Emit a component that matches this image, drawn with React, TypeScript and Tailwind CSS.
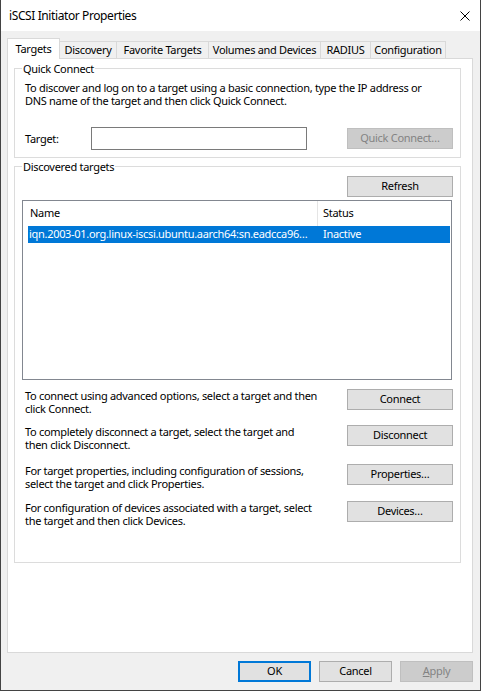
import React from 'react';

type BtnProps = {
  children: React.ReactNode;
  disabled?: boolean;
  focused?: boolean;
  className?: string;
};

const Button: React.FC<BtnProps> = ({ children, disabled, focused, className = '' }) => {
  let look = 'bg-[#e1e1e1] border border-[#adadad] text-black';
  if (disabled) look = 'bg-[#cccccc] border border-[#bfbfbf] text-[#838383]';
  if (focused) look = 'bg-[#e1e1e1] border-2 border-[#0078d7] text-black';
  return (
    <div className={`h-[21px] flex items-center justify-center shrink-0 ${look} ${className}`}>
      {children}
    </div>
  );
};

const Group: React.FC<{ label: string; className?: string; children: React.ReactNode }> = ({
  label,
  className = '',
  children,
}) => (
  <div className={`relative border border-[#dcdcdc] ${className}`}>
    <span className="absolute left-[7px] -top-[8px] bg-white px-[1px] leading-[15px]">{label}</span>
    {children}
  </div>
);

const tabs = [
  { name: 'Discovery', w: 'w-[57px]' },
  { name: 'Favorite Targets', w: 'w-[92px]' },
  { name: 'Volumes and Devices', w: 'w-[112px]' },
  { name: 'RADIUS', w: 'w-[50px]' },
  { name: 'Configuration', w: 'w-[75px]' },
];

const actions = [
  {
    lines: ['To connect using advanced options, select a target and then', 'click Connect.'],
    button: 'Connect',
    mt: 'mt-[9px]',
  },
  {
    lines: ['To completely disconnect a target, select the target and', 'then click Disconnect.'],
    button: 'Disconnect',
    mt: 'mt-[10px]',
  },
  {
    lines: ['For target properties, including configuration of sessions,', 'select the target and click Properties.'],
    button: 'Properties…',
    mt: 'mt-[13px]',
  },
  {
    lines: ['For configuration of devices associated with a target, select', 'the target and then click Devices.'],
    button: 'Devices…',
    mt: 'mt-[11px]',
  },
];

export default function App() {
  return (
    <div className="w-[481px] h-[691px] flex flex-col bg-[#f0f0f0] border-x border-b border-[#434343] text-[11px] tracking-[-0.3px] text-black font-['Segoe_UI','Noto_Sans',sans-serif] select-none">
      {/* Title bar */}
      <div className="h-[31px] shrink-0 bg-white flex items-center justify-between pl-[8px] pr-[10px]">
        <span className="text-[12px] tracking-[-0.4px]">iSCSI Initiator Properties</span>
        <svg width="10" height="10" viewBox="0 0 10 10" className="mt-[1px]">
          <path d="M0.5 0.5 L9.5 9.5 M9.5 0.5 L0.5 9.5" stroke="#000" strokeWidth="1" fill="none" />
        </svg>
      </div>

      {/* Tab strip */}
      <div className="mt-[7px] ml-[6px] h-[20px] flex items-end">
        <div className="relative z-10 w-[53px] h-[21px] -mb-px bg-white border-x border-t border-[#d9d9d9] flex items-center justify-center">
          Targets
        </div>
        {tabs.map((t) => (
          <div
            key={t.name}
            className={`${t.w} h-[17px] border-t border-r border-[#d9d9d9] flex items-center justify-center`}
          >
            {t.name}
          </div>
        ))}
      </div>

      {/* Tab panel */}
      <div className="ml-[6px] mr-[7px] h-[595px] shrink-0 bg-white border border-[#d9d9d9] flex flex-col">
        <Group label="Quick Connect" className="mt-[9px] ml-[6px] mr-[11px]">
          <div className="pt-[12px] pl-[10px] leading-[13px] whitespace-nowrap">
            To discover and log on to a target using a basic connection, type the IP address or
            <br />
            DNS name of the target and then click Quick Connect.
          </div>
          <div className="mt-[20px] pl-[10px] pr-[7px] pb-[7px] flex items-start">
            <span className="w-[66px] leading-[23px]">Target:</span>
            <div className="w-[216px] h-[23px] border border-[#7a7a7a] bg-white" />
            <Button disabled className="ml-auto mt-[1px] w-[106px]">
              Quick Connect…
            </Button>
          </div>
        </Group>

        <Group label="Discovered targets" className="mt-[8px] ml-[6px] mr-[11px]">
          <div className="pt-[9px] pr-[7px] flex justify-end">
            <Button className="w-[106px]">Refresh</Button>
          </div>

          {/* List view */}
          <div className="mt-[3px] ml-[7px] mr-[8px] h-[180px] border border-[#828790] bg-white">
            <div className="h-[25px] flex">
              <div className="w-[295px] border-r border-[#e5e5e5] pl-[7px] flex items-center">Name</div>
              <div className="flex-1 pl-[5px] flex items-center">Status</div>
            </div>
            <div className="ml-[5px] mr-[1px] h-[17px] bg-[#0078d7] text-white flex items-center whitespace-nowrap">
              <div className="w-[290px] pl-[1px]">
                iqn.2003-01.org.linux-iscsi.ubuntu.aarch64:sn.eadcca96…
              </div>
              <div className="pl-[5px]">Inactive</div>
            </div>
          </div>

          <div className="pl-[10px] pr-[7px] pb-[35px]">
            {actions.map((a) => (
              <div key={a.button} className={`${a.mt} flex items-start justify-between`}>
                <div className="leading-[13px] whitespace-nowrap">
                  <div className="h-[13px]">{a.lines[0]}</div>
                  <div className="h-[13px]">{a.lines[1]}</div>
                </div>
                <Button className="w-[106px]">{a.button}</Button>
              </div>
            ))}
          </div>
        </Group>
      </div>

      {/* Dialog buttons */}
      <div className="mt-[8px] pr-[7px] flex justify-end gap-[8px]">
        <Button focused className="w-[73px]">OK</Button>
        <Button className="w-[73px]">Cancel</Button>
        <Button disabled className="w-[73px]">
          <span>
            <span className="underline">A</span>pply
          </span>
        </Button>
      </div>
    </div>
  );
}
